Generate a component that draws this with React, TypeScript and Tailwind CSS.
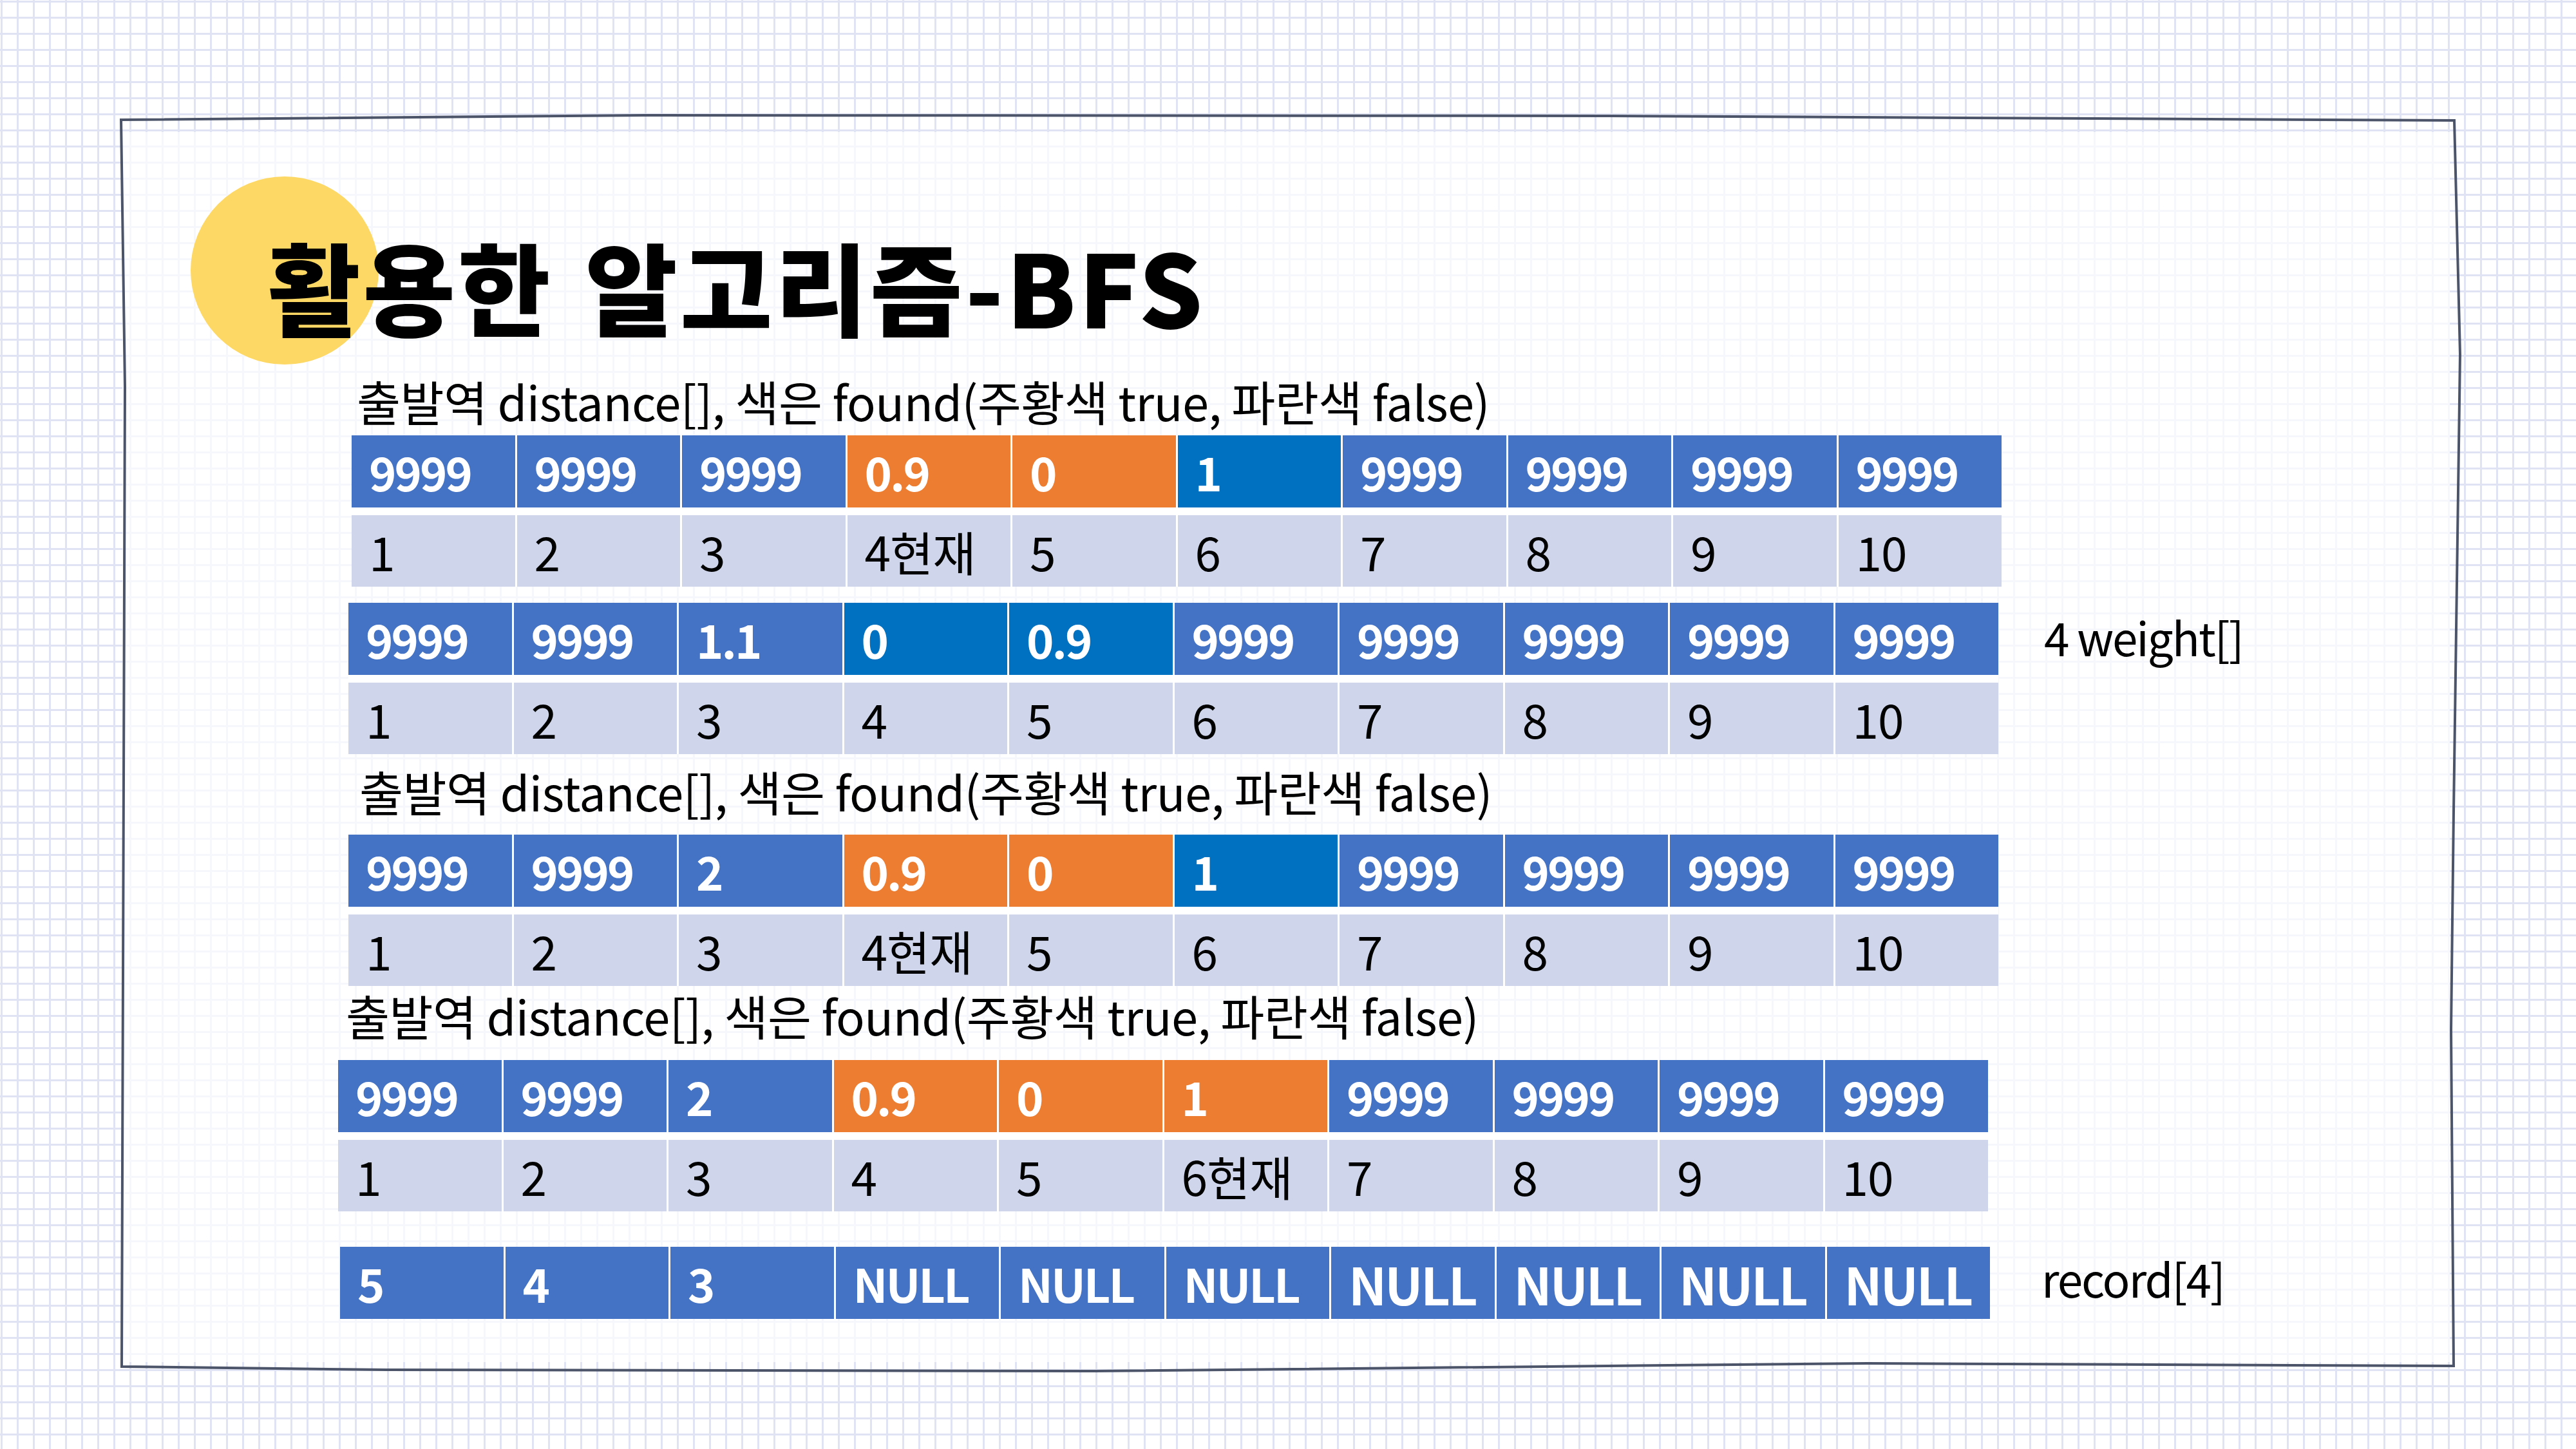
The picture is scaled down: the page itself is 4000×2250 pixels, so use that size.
import React from 'react'

type Cell = { v: string; c: string; big?: boolean }

const B = 'bg-[#4472c4]'
const O = 'bg-[#ed7d31]'
const D = 'bg-[#0070c0]'

const blue = (v: string): Cell => ({ v, c: B })
const nines = (n: number): Cell[] => Array.from({ length: n }, () => blue('9999'))
const idx = (swap?: Record<number, string>) =>
  Array.from({ length: 10 }, (_, i) => (swap && swap[i] ? swap[i] : String(i + 1)))

const HEADER = '출발역 distance[], 색은 found(주황색 true, 파란색 false)'

// 값 행
function ValueRow({ cells }: { cells: Cell[] }) {
  return (
    <div className="grid grid-cols-10 gap-x-[3px] h-[112px]">
      {cells.map((cell, i) => (
        <div
          key={i}
          className={`${cell.c} flex items-center pl-[27px] font-bold text-white leading-none tracking-[-3px] ${cell.big ? 'text-[79px]' : 'text-[72px]'}`}
        >
          {cell.v}
        </div>
      ))}
    </div>
  )
}

// 인덱스 행
function IndexRow({ labels }: { labels: string[] }) {
  return (
    <div className="grid grid-cols-10 gap-x-[3px] h-[111px]">
      {labels.map((label, i) => (
        <div key={i} className="bg-[#cfd5ea] flex items-center pl-[27px] text-[73px] leading-none tracking-[-1px] text-black">
          {label}
        </div>
      ))}
    </div>
  )
}

function ArrayTable({ top, bottom }: { top: Cell[]; bottom: string[] }) {
  return (
    <div className="w-[2562px] bg-white flex flex-col gap-y-[12px]">
      <ValueRow cells={top} />
      <IndexRow labels={bottom} />
    </div>
  )
}

function Header({ className }: { className: string }) {
  return (
    <div className={`h-[74px] text-[74px] leading-[74px] tracking-[-0.6px] text-black whitespace-nowrap ${className}`}>
      {HEADER}
    </div>
  )
}

function SideLabel({ text, className }: { text: string; className: string }) {
  return (
    <div className={`h-[74px] text-[71px] leading-[74px] tracking-[-2px] text-black whitespace-nowrap ${className}`}>
      {text}
    </div>
  )
}

export default function App() {
  const t1Top = [...nines(3), { v: '0.9', c: O }, { v: '0', c: O }, { v: '1', c: D }, ...nines(4)]
  const t2Top = [...nines(2), blue('1.1'), { v: '0', c: D }, { v: '0.9', c: D }, ...nines(5)]
  const t3Top = [...nines(2), blue('2'), { v: '0.9', c: O }, { v: '0', c: O }, { v: '1', c: D }, ...nines(4)]
  const t4Top = [...nines(2), blue('2'), { v: '0.9', c: O }, { v: '0', c: O }, { v: '1', c: O }, ...nines(4)]
  const record: Cell[] = [
    blue('5'),
    blue('4'),
    blue('3'),
    blue('NULL'),
    blue('NULL'),
    blue('NULL'),
    ...Array.from({ length: 4 }, () => ({ v: 'NULL', c: B, big: true })),
  ]

  return (
    <div className="relative w-[4000px] h-[2250px] overflow-hidden bg-white bg-[linear-gradient(to_right,#dfe3f3_3px,transparent_3px),linear-gradient(to_bottom,#dfe3f3_3px,transparent_3px)] bg-[size:25px_25px] bg-[position:1px_1px] font-['Noto_Sans_CJK_KR',sans-serif]">
      <div className="ml-[190px] pt-[205px]">
        <div className="w-[3614px] h-[1910px] bg-white/70 flex flex-col">
          {/* 제목 */}
          <div className="relative mt-[159px] ml-[226px] h-[156px]">
            <div className="absolute left-[-120px] top-[-90px] w-[292px] h-[292px] rounded-full bg-[#fdd865]" />
            <div className="relative flex text-[156px] leading-[156px] font-black text-black tracking-[4px] whitespace-nowrap">
              <span>활용한</span>
              <span className="ml-[50px]">알고리즘-BFS</span>
            </div>
          </div>

          <Header className="mt-[65px] ml-[364px]" />
          <div className="mt-[17px] ml-[356px]">
            <ArrayTable top={t1Top} bottom={idx({ 3: '4현재' })} />
          </div>

          <div className="mt-[25px] ml-[351px] flex items-start">
            <ArrayTable top={t2Top} bottom={idx()} />
            <SideLabel text="4 weight[]" className="ml-[71px] mt-[15px]" />
          </div>

          <Header className="mt-[20px] ml-[368px]" />
          <div className="mt-[31px] ml-[351px]">
            <ArrayTable top={t3Top} bottom={idx({ 3: '4현재' })} />
          </div>

          <Header className="mt-[8px] ml-[347px]" />
          <div className="mt-[33px] ml-[335px]">
            <ArrayTable top={t4Top} bottom={idx({ 5: '6현재' })} />
          </div>

          <div className="mt-[55px] ml-[338px] flex items-start">
            <div className="w-[2562px] bg-white">
              <ValueRow cells={record} />
            </div>
            <SideLabel text="record[4]" className="ml-[80px] mt-[11px]" />
          </div>
        </div>
      </div>

      {/* 손그림 테두리 */}
      <svg
        className="absolute left-0 top-0 pointer-events-none"
        width="4000"
        height="2250"
        viewBox="0 0 4000 2250"
        fill="none"
      >
        <path
          d="M188 186 L1000 179 L2500 180 L3811 187 L3820 550 L3810 1260 L3806 1600 L3810 2121 L2900 2117 L1700 2129 L600 2127 L189 2122 L194 600 Z"
          stroke="#4b5469"
          strokeWidth="4"
          strokeLinejoin="miter"
        />
      </svg>
    </div>
  )
}
